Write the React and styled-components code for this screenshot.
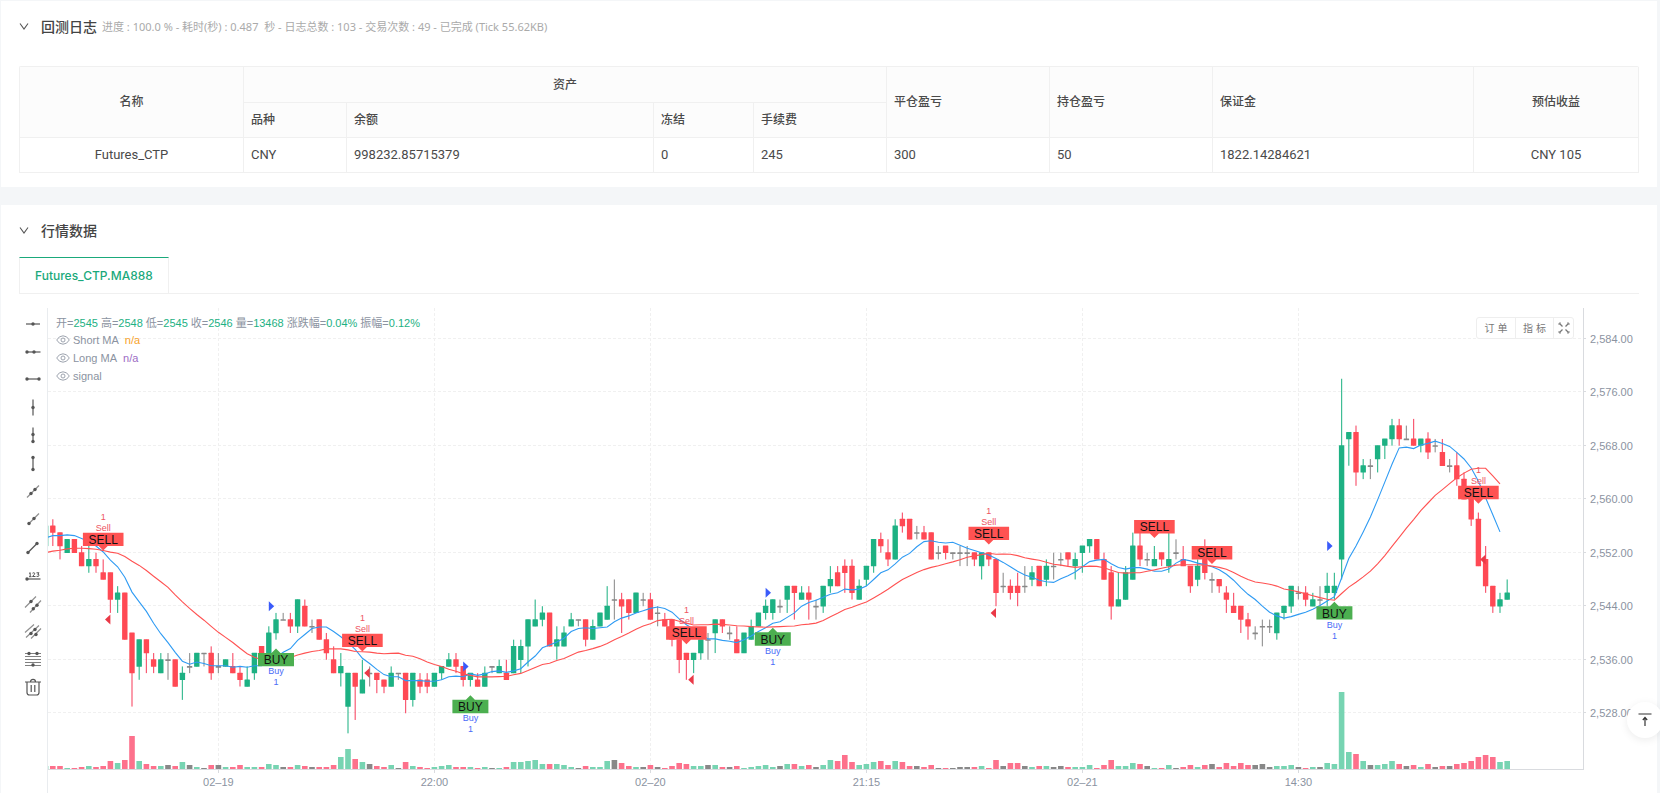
import React, { useEffect, useRef, useState } from 'react';
import styled, { createGlobalStyle } from 'styled-components';

const UI_FONT = `Inter, "Noto Sans CJK SC", sans-serif`;
const NOTE_FONT = `"Noto Sans", "Noto Sans CJK SC", sans-serif`;
const TABLE_FONT = `Roboto, "Noto Sans CJK SC", sans-serif`;
const CHART_FONT = `"Liberation Sans", "Noto Sans CJK SC", sans-serif`;

const GlobalStyle = createGlobalStyle`
  *, *::before, *::after { box-sizing: border-box; }
  body {
    margin: 0;
    background: #f4f6f8;
    color: #4a4a4a;
    font-family: ${UI_FONT};
    font-size: 12px;
  }
  button { font: inherit; color: inherit; }
`;

const Page = styled.main`
  display: flex;
  flex-direction: column;
  gap: 18px;
  min-height: 100vh;
  padding: 1px 3px 0 1px;
`;

const Panel = styled.section`
  background: #fff;
  padding: 0 18px ${(p) => (p.$flush ? 0 : 14)}px;
`;

const PanelHeader = styled.header`
  display: flex;
  align-items: center;
  height: 52px;
`;

const Toggle = styled.button`
  display: flex;
  padding: 0;
  margin-right: 12px;
  border: 0;
  background: none;
  cursor: pointer;
`;

const PanelTitle = styled.h2`
  margin: 0 5px 0 0;
  font-size: 14px;
  line-height: 20px;
  font-weight: 500;
  color: #444;
`;

const PanelNote = styled.span`
  font-family: ${NOTE_FONT};
  font-size: 11px;
  line-height: 20px;
  color: #aaa;
  white-space: pre;
`;

const AssetTable = styled.table`
  width: 100%;
  margin-top: 13px;
  table-layout: fixed;
  border-collapse: separate;
  border-spacing: 0;
  border-top: 1px solid #f0f0f0;
  border-left: 1px solid #f0f0f0;
  border-radius: 2px 2px 0 0;
`;

const Cell = styled.td`
  height: 35px;
  padding: 0 7px;
  border-right: 1px solid #f0f0f0;
  border-bottom: 1px solid #f0f0f0;
  text-align: ${(p) => (p.$center ? 'center' : 'left')};
  font-family: ${TABLE_FONT};
  font-size: 13px;
  line-height: 20px;
`;

const HeadCell = styled(Cell).attrs({ as: 'th' })`
  height: ${(p) => (p.$tall ? 36 : 35)}px;
  background: #fcfcfc;
  font-size: 12px;
  font-weight: 500;
`;

const TabBar = styled.div`
  display: flex;
  border-bottom: 1px solid #f0f0f0;
`;

const Tab = styled.button`
  height: 36px;
  padding: 0 15px;
  border: 1px solid #f0f0f0;
  border-top-color: #1aa97b;
  border-bottom: 0;
  background: #fff;
  color: #1aa97b;
  font-weight: 500;
  cursor: pointer;
`;

const ChartArea = styled.div`
  display: flex;
  margin-top: 14px;
`;

const ToolBar = styled.div`
  display: flex;
  flex-direction: column;
  flex: none;
  width: 29px;
  padding-top: 2px;
  border-right: 1px solid #e9ecef;
`;

const Tool = styled.button`
  display: flex;
  align-items: center;
  justify-content: center;
  width: 28px;
  height: 28px;
  padding: 0;
  border: 0;
  background: none;
  color: #555;
  cursor: pointer;
`;

const ChartBox = styled.div`
  position: relative;
  flex: 1;
  min-width: 0;
  height: 485px;
  overflow: hidden;
  font-family: ${CHART_FONT};
  font-size: 11px;
`;

const ChartSvg = styled.svg`
  display: block;
`;

const Legend = styled.div`
  position: absolute;
  top: 5px;
  left: 8px;
  color: #8b93a1;
`;

const LegendRow = styled.div`
  display: flex;
  align-items: center;
  gap: 3px;
  height: 18px;
  white-space: nowrap;
`;

const Value = styled.span`
  color: ${(p) => p.$color};
`;

const SeriesValue = styled(Value)`
  margin-left: 3px;
`;

const Eye = styled.button`
  display: flex;
  margin: 0;
  padding: 0;
  border: 0;
  background: none;
  cursor: pointer;
`;

const ChartActions = styled.div`
  position: absolute;
  top: 9px;
  right: 65px;
  display: flex;
  height: 22px;
  border: 1px solid #eee;
  border-radius: 3px;
  background: #fff;
`;

const ActionButton = styled.button`
  display: flex;
  align-items: center;
  justify-content: center;
  width: ${(p) => (p.$icon ? 20 : 38)}px;
  padding: 0 0 ${(p) => (p.$icon ? 0 : 2)}px;
  border: 0;
  background: none;
  color: #777;
  font-size: 10px;
  cursor: pointer;

  & + & { border-left: 1px solid #eee; }
`;

const BackTop = styled.button`
  position: fixed;
  right: -3px;
  bottom: 55px;
  display: flex;
  align-items: center;
  justify-content: center;
  width: 36px;
  height: 36px;
  padding: 0;
  border: 0;
  border-radius: 50%;
  background: #fff;
  color: #333;
  box-shadow: 0 2px 8px rgba(0, 0, 0, 0.08);
  cursor: pointer;
`;

/* Candles: [direction, high, open/close top, open/close bottom, low, volume];
   prices are offsets from 2500, direction is U (up), D (down) or F (flat). */
const CANDLES = `
U 56 56 53 53 3|D 57 56 55 53 3|D 55 55 53 51 3|U 54 54 52 52 1|D 54 54 52 52 1|D 53 52 50 50 2|U 53 51 50 49 3|D 52 51 50 49 2
D 51 49 48 48 3|D 49 49 45 43 8|U 47 46 45 43 6|D 46 46 39 39 9|D 40 40 34 29 33|U 39 39 35 33 8|D 39 39 37 34 5|D 37 36 35 34 3
U 37 36 34 34 3|F 37 36 36 33 4|D 36 36 32 32 3|U 35 34 33 30 7|F 37 35 35 34 4|U 37 37 35 35 2|F 37 37 37 35 1|D 38 37 34 33 4
F 37 35 35 34 4|U 36 36 35 35 2|D 37 35 34 34 2|D 35 34 33 32 4|U 35 33 32 32 2|U 37 37 34 33 2|D 38 38 37 37 2|U 41 40 37 37 5
U 43 42 40 39 4|F 43 42 42 42 2|D 43 42 41 40 2|U 45 45 41 40 4|D 45 44 41 41 3|F 42 41 41 40 2|D 42 42 39 39 2|D 40 39 37 36 2
D 38 36 34 34 4|U 37 35 34 32 12|U 34 34 29 25 20|D 34 34 32 27 10|U 36 33 31 31 7|F 35 34 34 32 5|D 34 34 33 31 3|D 33 33 32 31 2
U 35 34 32 32 4|F 34 34 34 33 1|D 34 34 30 28 7|U 34 34 30 29 3|D 34 33 32 31 2|D 34 33 32 31 1|U 34 34 32 32 2|U 35 35 34 33 3
U 37 36 35 35 4|D 37 36 35 34 2|D 35 35 33 32 2|U 34 34 33 32 2|D 34 33 32 32 1|U 35 34 32 32 2|F 35 35 35 34 1|U 36 35 34 34 1
D 36 34 33 33 2|U 39 38 34 34 7|U 39 38 36 34 7|U 42 42 38 35 8|U 45 42 41 41 9|U 44 43 42 41 5|D 43 43 38 38 5|U 41 39 38 36 5
U 41 40 38 38 4|U 43 42 41 41 2|F 42 42 42 41 1|D 42 42 39 38 3|U 42 41 39 39 2|U 43 43 41 41 2|U 47 44 42 42 8|F 48 45 45 42 9
D 46 45 44 40 6|D 45 45 43 42 3|U 46 46 43 43 2|F 46 45 45 44 2|D 46 45 42 42 4|F 44 43 43 41 2|D 43 42 41 41 1|D 42 42 39 38 3
D 39 39 36 34 6|D 37 37 36 33 5|U 37 37 36 34 3|U 39 39 37 36 3|F 40 39 39 36 4|U 42 42 40 37 4|D 42 42 41 40 2|F 41 40 40 39 2
D 41 39 37 37 3|U 40 40 37 37 1|U 42 41 39 39 2|U 43 43 41 41 3|U 45 44 43 42 4|U 45 45 43 42 2|F 45 44 44 43 3|U 47 47 45 43 5
D 47 47 46 42 5|U 47 46 45 45 3|D 47 46 45 42 4|F 45 44 44 42 2|U 47 47 44 43 4|U 50 48 47 46 9|D 50 49 47 47 8|D 51 50 49 46 14
D 51 50 46 45 7|U 48 47 45 45 4|U 50 50 48 47 5|U 54 54 50 49 7|D 55 54 53 52 8|D 54 52 51 50 4|U 57 56 51 51 8|D 58 57 56 55 7
D 57 57 54 54 3|F 56 55 55 54 3|D 56 55 54 54 2|D 55 55 51 51 4|F 53 52 52 51 1|D 53 53 52 51 1|F 52 52 52 51 1|F 53 52 52 50 2
F 53 52 52 50 2|D 52 52 51 50 2|U 52 52 50 48 3|D 52 52 51 50 1|D 51 51 46 44 9|F 49 47 47 46 3|D 48 47 46 45 6|D 49 47 46 44 6
F 50 47 47 46 3|U 50 49 48 47 2|D 50 50 47 47 3|U 51 50 48 47 3|F 52 50 50 48 2|F 52 51 51 50 3|D 52 52 51 50 2|U 52 51 50 48 2
U 53 53 52 49 2|U 54 54 53 52 4|D 54 54 51 51 1|D 52 51 48 48 4|D 50 49 44 42 9|U 49 45 44 44 3|U 50 49 45 45 3|U 55 53 48 48 6
D 55 53 51 50 5|F 52 51 51 50 3|U 53 51 50 50 1|D 52 52 51 50 1|U 55 51 50 49 4|F 54 52 52 51 1|D 53 51 50 50 2|D 50 50 47 46 4
U 51 50 48 47 2|D 54 51 49 48 4|F 49 48 48 46 5|D 48 48 47 46 2|D 47 46 45 43 6|D 46 44 43 43 3|D 44 44 42 40 6|D 43 42 41 39 4
F 41 40 40 39 4|F 42 41 41 38 5|F 42 41 41 40 2|U 43 43 40 39 3|U 44 44 43 42 3|U 47 47 44 43 4|F 47 46 46 45 2|D 47 46 45 44 1
U 46 45 44 44 2|F 47 45 45 44 2|U 49 47 46 44 6|U 49 47 46 45 5|U 78 68 51 48 77|U 70 70 69 65 17|D 71 70 64 62 15|U 66 65 64 63 8
F 66 65 65 63 4|U 68 68 66 64 4|U 69 69 68 66 5|U 72 71 69 68 8|D 72 71 69 68 5|F 71 69 69 69 3|D 72 69 68 68 4|U 69 69 68 67 2
D 70 69 67 66 5|F 69 68 68 67 2|D 69 67 65 65 3|F 66 65 65 64 3|D 67 65 63 62 5|D 64 63 60 60 6|D 60 60 57 56 8|D 58 57 50 50 12
D 53 51 47 46 14|D 47 47 44 43 12|U 46 45 44 43 7|U 48 46 45 45 8
`
  .trim()
  .split(/[|\n]/)
  .map((row) => {
    const [dir, ...nums] = row.trim().split(' ');
    const [high, top, bottom, low, volume] = nums.map(Number);
    return { dir, high, top, bottom, low, volume, close: dir === 'D' ? bottom : top };
  });

/* Closes of the bars before the visible range, used to seed the averages. */
const EARLIER = [50, 50, 50, 50, 50, 52, 52, 52, 50, 50, 49, 49, 52, 53, 53, 53, 54, 55, 56, 56];

const STEP = 7.2;
const BODY = 5.4;
const BASELINE = 461;
const barX = (i) => i * STEP - 2.4;
const priceY = (p) => 244.7 + (52 - p) * 6.69;

function averagePath(period) {
  const closes = [...EARLIER, ...CANDLES.map((c) => c.close)];
  const points = [];
  for (let i = 0; i < CANDLES.length - 1; i += 1) {
    const end = i + EARLIER.length + 1;
    const slice = closes.slice(end - period, end);
    const avg = slice.reduce((a, b) => a + b, 0) / period;
    points.push(`${barX(i).toFixed(1)},${priceY(avg).toFixed(1)}`);
  }
  return points.join(' ');
}

const SHORT_MA = averagePath(9);
const LONG_MA = averagePath(21);

const PRICES = [84, 76, 68, 60, 52, 44, 36, 28];
const TIMES = [
  [24, '02–19'],
  [54, '22:00'],
  [84, '02–20'],
  [114, '21:15'],
  [144, '02–21'],
  [174, '14:30'],
];

/* Signals: [bar, price at the label's tip, whether an order was placed]. */
const SELLS = [
  [8, 52.3, true],
  [44, 37.2, true],
  [89, 38.3, true],
  [131, 53.2, true],
  [154, 54.2, false],
  [162, 50.3, false],
  [199, 59.3, true],
];
const BUYS = [
  [32, 37.7],
  [59, 30.7],
  [101, 40.8],
  [179, 44.7],
];
const SELL_FILLS = [[9, 42], [45, 34], [90, 33], [132, 43], [200, 51]];
const BUY_FILLS = [[31, 44], [58, 35], [100, 46], [178, 53]];

const BODY_COLOR = { U: '#1db183', D: '#ff4954', F: '#888' };
const WICK_COLOR = { U: '#1db183', D: '#f8405c', F: '#888' };
const VOLUME_COLOR = { U: '#77d4b2', D: '#fd718c', F: '#888' };

function Candle({ data, index }) {
  const x = barX(index);
  const top = priceY(data.top);
  const height = Math.max(1, priceY(data.bottom) - top);
  return (
    <g>
      <rect x={x - 0.6} y={priceY(data.high)} width={1.2} height={Math.max(1, priceY(data.low) - priceY(data.high))} fill={WICK_COLOR[data.dir]} opacity={0.85} />
      <rect x={x - BODY / 2} y={top - 0.4} width={BODY} height={height + 0.6} rx={0.5} fill={BODY_COLOR[data.dir]} />
      <rect x={x - 2.8} y={BASELINE - data.volume} width={5.6} height={data.volume} fill={VOLUME_COLOR[data.dir]} />
    </g>
  );
}

function SellMark({ bar, price, order }) {
  const x = barX(bar);
  const y = priceY(price);
  return (
    <g textAnchor="middle">
      {order && (
        <g fontSize="9" fill="#ee5462">
          <text x={x} y={y - 31}>1</text>
          <text x={x} y={y - 20}>Sell</text>
        </g>
      )}
      <path d={`M${x - 20.3} ${y - 18}h40.6v13.4h-15.8l-4.5 4.5l-4.5 -4.5h-15.8z`} fill="#ff5252" />
      <text x={x} y={y - 7} fontSize="12" fill="#111">SELL</text>
    </g>
  );
}

function BuyMark({ bar, price }) {
  const x = barX(bar);
  const y = priceY(price);
  return (
    <g textAnchor="middle">
      <path d={`M${x - 18} ${y + 18}h36v-13.4h-13.5l-4.5 -4.5l-4.5 4.5h-13.5z`} fill="#4caf50" />
      <text x={x} y={y + 16} fontSize="12" fill="#111">BUY</text>
      <g fontSize="9" fill="#4a6cf7">
        <text x={x} y={y + 26}>Buy</text>
        <text x={x} y={y + 37}>1</text>
      </g>
    </g>
  );
}

function KLineChart({ width }) {
  const axisX = width - 56;
  return (
    <ChartSvg width={width} height={485} role="img" aria-label="Futures_CTP.MA888">
      <g stroke="#f0f0f0" strokeDasharray="3 2" shapeRendering="crispEdges">
        {PRICES.map((p) => (
          <line key={p} x1={0} x2={axisX} y1={Math.round(priceY(p)) - 0.5} y2={Math.round(priceY(p)) - 0.5} />
        ))}
        {TIMES.map(([i]) => (
          <line key={i} y1={0} y2={BASELINE} x1={Math.round(barX(i)) + 0.5} x2={Math.round(barX(i)) + 0.5} />
        ))}
      </g>
      {CANDLES.map((c, i) => (
        <Candle key={i} data={c} index={i} />
      ))}
      <polyline points={SHORT_MA} fill="none" stroke="#2f9bf3" strokeWidth="1.1" />
      <polyline points={LONG_MA} fill="none" stroke="#ff5252" strokeWidth="1.1" />
      {SELL_FILLS.map(([i, p]) => (
        <path key={i} d={`M${barX(i)} ${priceY(p) - 5}v10l-5.4 -5z`} fill="#ea3947" />
      ))}
      {BUY_FILLS.map(([i, p]) => (
        <path key={i} d={`M${barX(i)} ${priceY(p) - 5}v10l5.4 -5z`} fill="#3a5bfa" />
      ))}
      {SELLS.map(([bar, price, order]) => (
        <SellMark key={bar} bar={bar} price={price} order={order} />
      ))}
      {BUYS.map(([bar, price]) => (
        <BuyMark key={bar} bar={bar} price={price} />
      ))}
      <g stroke="#d9dbdf" shapeRendering="crispEdges">
        <line x1={0} x2={axisX} y1={BASELINE + 0.5} y2={BASELINE + 0.5} />
        <line x1={axisX + 0.5} x2={axisX + 0.5} y1={0} y2={BASELINE + 1} />
        {PRICES.map((p) => (
          <line key={p} x1={axisX} x2={axisX + 3} y1={Math.round(priceY(p)) - 0.5} y2={Math.round(priceY(p)) - 0.5} />
        ))}
        {TIMES.map(([i]) => (
          <line key={i} y1={BASELINE} y2={BASELINE + 4} x1={Math.round(barX(i)) + 0.5} x2={Math.round(barX(i)) + 0.5} />
        ))}
      </g>
      <g fill="#8b93a1" fontSize="11">
        {PRICES.map((p) => (
          <text key={p} x={axisX + 7} y={Math.round(priceY(p)) + 4}>{`2,5${p}.00`}</text>
        ))}
        {TIMES.map(([i, label]) => (
          <text key={i} x={barX(i)} y={478} textAnchor="middle">{label}</text>
        ))}
      </g>
    </ChartSvg>
  );
}

const Dot = ({ x, y }) => <circle cx={x} cy={y} r="1.7" fill="currentColor" stroke="none" />;

const TOOLS = [
  ['水平直线', <><path d="M1 8.5h14" /><Dot x={8} y={8.5} /></>],
  ['水平射线', <><path d="M2 8.5h13.5" /><Dot x={2} y={8.5} /><Dot x={9} y={8.5} /></>],
  ['水平线段', <><path d="M2 7.5h12" /><Dot x={2} y={7.5} /><Dot x={14} y={7.5} /></>],
  ['垂直直线', <><path d="M8 0v16" /><Dot x={8} y={8} /></>],
  ['垂直射线', <><path d="M8 0v14" /><Dot x={8} y={7} /><Dot x={8} y={14} /></>],
  ['垂直线段', <><path d="M8 2v12" /><Dot x={8} y={2} /><Dot x={8} y={14} /></>],
  ['直线', <><path opacity=".65" d="M2 14L14 2" /><Dot x={6} y={10} /><Dot x={10} y={6} /></>],
  ['射线', <><path opacity=".65" d="M4 12L14 2" /><Dot x={4} y={12} /><Dot x={9} y={7} /></>],
  ['线段', <><path d="M3 13L12 4" /><Dot x={3} y={13} /><Dot x={12} y={4} /></>],
  ['价格线', <><path d="M2 11.5h13.500" /><Dot x={2} y={11.5} /><path strokeWidth="1" d="M4 6l1.200-.8v4M4 9.200h2.500M7.500 5.700q1.500-1 2.300.1q0 1-2.300 3.200h3M11.500 5.300h2.500l-1.300 1.500q1.700 0 1.300 1.400q-.6 1.200-2.500.6" /></>],
  ['平行直线', <><path opacity=".65" d="M0 12L11 1M5 17L16 5" /><Dot x={6} y={6} /><Dot x={8.3} y={13.300} /><Dot x={12} y={9.700} /></>],
  ['价格通道线', <><path opacity=".65" d="M0 9L9 1M1 14L14 2M6 15L16 5" /><Dot x={6} y={10} /><Dot x={10} y={6} /><Dot x={11} y={11} /></>],
  ['斐波那契回调', <><path opacity=".75" d="M0 2h16M0 5h16M0 8h16M0 11h16M0 14h16" /><Dot x={4} y={2} /><Dot x={12} y={2} /><Dot x={8} y={13.500} /></>],
  ['删除', <path d="M0 2.500h16M5.500 2.500c0-3.500 5-3.500 5 0M2 2.500v10.500q0 2.500 2.500 2.500h7q2.500 0 2.500-2.500V2.500M6.200 5.500v7M9.800 5.500v7" />],
];

function Chevron() {
  return (
    <svg width="10" height="10" viewBox="0 0 10 10" fill="none" stroke="#555" strokeWidth="1.100">
      <path d="M1 1.500l4 5.500l4-5.500" />
    </svg>
  );
}

function EyeIcon() {
  return (
    <svg width="14" height="10" viewBox="0 0 14 10" fill="none" stroke="#9299a5" strokeWidth="0.900">
      <path d="M.7 5Q3 .8 7 .8T13.300 5Q11 9.200 7 9.200T.7 5z" />
      <circle cx="7" cy="5" r="2" />
    </svg>
  );
}

const QUOTES = [
  ['开', '2545'],
  ['高', '2548'],
  ['低', '2545'],
  ['收', '2546'],
  ['量', '13468'],
  ['涨跌幅', '0.04%'],
  ['振幅', '0.12%'],
];

const SERIES = [
  { name: 'Short MA', value: 'n/a', color: '#f7a32b' },
  { name: 'Long MA', value: 'n/a', color: '#9c6cc4' },
  { name: 'signal' },
];

const COLUMNS = [224, 103, 307, 100, 133, 163, 163, 261, 165];

function AssetSummary() {
  const total = COLUMNS.reduce((a, b) => a + b, 0);
  return (
    <AssetTable>
      <colgroup>
        {COLUMNS.map((w, i) => (
          <col key={i} style={{ width: `${(w / total) * 100}%` }} />
        ))}
      </colgroup>
      <thead>
        <tr>
          <HeadCell rowSpan={2} $center>名称</HeadCell>
          <HeadCell colSpan={4} $center $tall>资产</HeadCell>
          <HeadCell rowSpan={2}>平仓盈亏</HeadCell>
          <HeadCell rowSpan={2}>持仓盈亏</HeadCell>
          <HeadCell rowSpan={2}>保证金</HeadCell>
          <HeadCell rowSpan={2} $center>预估收益</HeadCell>
        </tr>
        <tr>
          <HeadCell>品种</HeadCell>
          <HeadCell>余额</HeadCell>
          <HeadCell>冻结</HeadCell>
          <HeadCell>手续费</HeadCell>
        </tr>
      </thead>
      <tbody>
        <tr>
          <Cell $center>Futures_CTP</Cell>
          <Cell>CNY</Cell>
          <Cell>998232.85715379</Cell>
          <Cell>0</Cell>
          <Cell>245</Cell>
          <Cell>300</Cell>
          <Cell>50</Cell>
          <Cell>1822.14284621</Cell>
          <Cell $center>CNY 105</Cell>
        </tr>
      </tbody>
    </AssetTable>
  );
}

export default function App() {
  const boxRef = useRef(null);
  const [width, setWidth] = useState(1591);

  useEffect(() => {
    const measure = () => setWidth(Math.floor(boxRef.current.clientWidth));
    measure();
    const observer = new ResizeObserver(measure);
    observer.observe(boxRef.current);
    return () => observer.disconnect();
  }, []);

  return (
    <>
      <GlobalStyle />
      <Page>
        <Panel>
          <PanelHeader>
            <Toggle aria-label="收起回测日志"><Chevron /></Toggle>
            <PanelTitle>回测日志</PanelTitle>
            <PanelNote>{'进度 : 100.0 % - 耗时(秒) : 0.487  秒 - 日志总数 : 103 - 交易次数 : 49 - 已完成 (Tick 55.62KB)'}</PanelNote>
          </PanelHeader>
          <AssetSummary />
        </Panel>

        <Panel $flush>
          <PanelHeader>
            <Toggle aria-label="收起行情数据"><Chevron /></Toggle>
            <PanelTitle>行情数据</PanelTitle>
          </PanelHeader>
          <TabBar role="tablist">
            <Tab role="tab" aria-selected="true">Futures_CTP.MA888</Tab>
          </TabBar>
          <ChartArea>
            <ToolBar role="toolbar">
              {TOOLS.map(([name, drawing]) => (
                <Tool key={name} aria-label={name}>
                  <svg width="16" height="18" viewBox="0 0 16 17" overflow="visible" fill="none" stroke="currentColor" strokeWidth="1.200">
                    {drawing}
                  </svg>
                </Tool>
              ))}
            </ToolBar>
            <ChartBox ref={boxRef}>
              <KLineChart width={width} />
              <Legend>
                <LegendRow>
                  {QUOTES.map(([name, value]) => (
                    <span key={name}>
                      {name}=<Value $color="#1db183">{value}</Value>
                    </span>
                  ))}
                </LegendRow>
                {SERIES.map((s) => (
                  <LegendRow key={s.name}>
                    <Eye aria-label={`显示 ${s.name}`}><EyeIcon /></Eye>
                    <span>{s.name}</span>
                    {s.value && <SeriesValue $color={s.color}>{s.value}</SeriesValue>}
                  </LegendRow>
                ))}
              </Legend>
              <ChartActions>
                <ActionButton>订 单</ActionButton>
                <ActionButton>指 标</ActionButton>
                <ActionButton $icon aria-label="全屏">
                  <svg width="12" height="12" viewBox="0 0 12 12" fill="none" stroke="#777" strokeWidth="1.300">
                    <path d="M1.500 1.500l3 3M10.500 1.500l-3 3M1.500 10.500l3-3M10.500 10.500l-3-3" />
                    <path strokeWidth="0.800" d="M1 3V1h2M9 1h2v2M1 9v2h2M11 9v2H9" />
                  </svg>
                </ActionButton>
              </ChartActions>
            </ChartBox>
          </ChartArea>
        </Panel>
      </Page>
      <BackTop aria-label="回到顶部">
        <svg width="14" height="14" viewBox="0 0 14 14" fill="none" stroke="currentColor" strokeWidth="1.200">
          <path d="M.5 1h13M7 13V4.500M4.800 7L7 4.500L9.200 7" />
        </svg>
      </BackTop>
    </>
  );
}
